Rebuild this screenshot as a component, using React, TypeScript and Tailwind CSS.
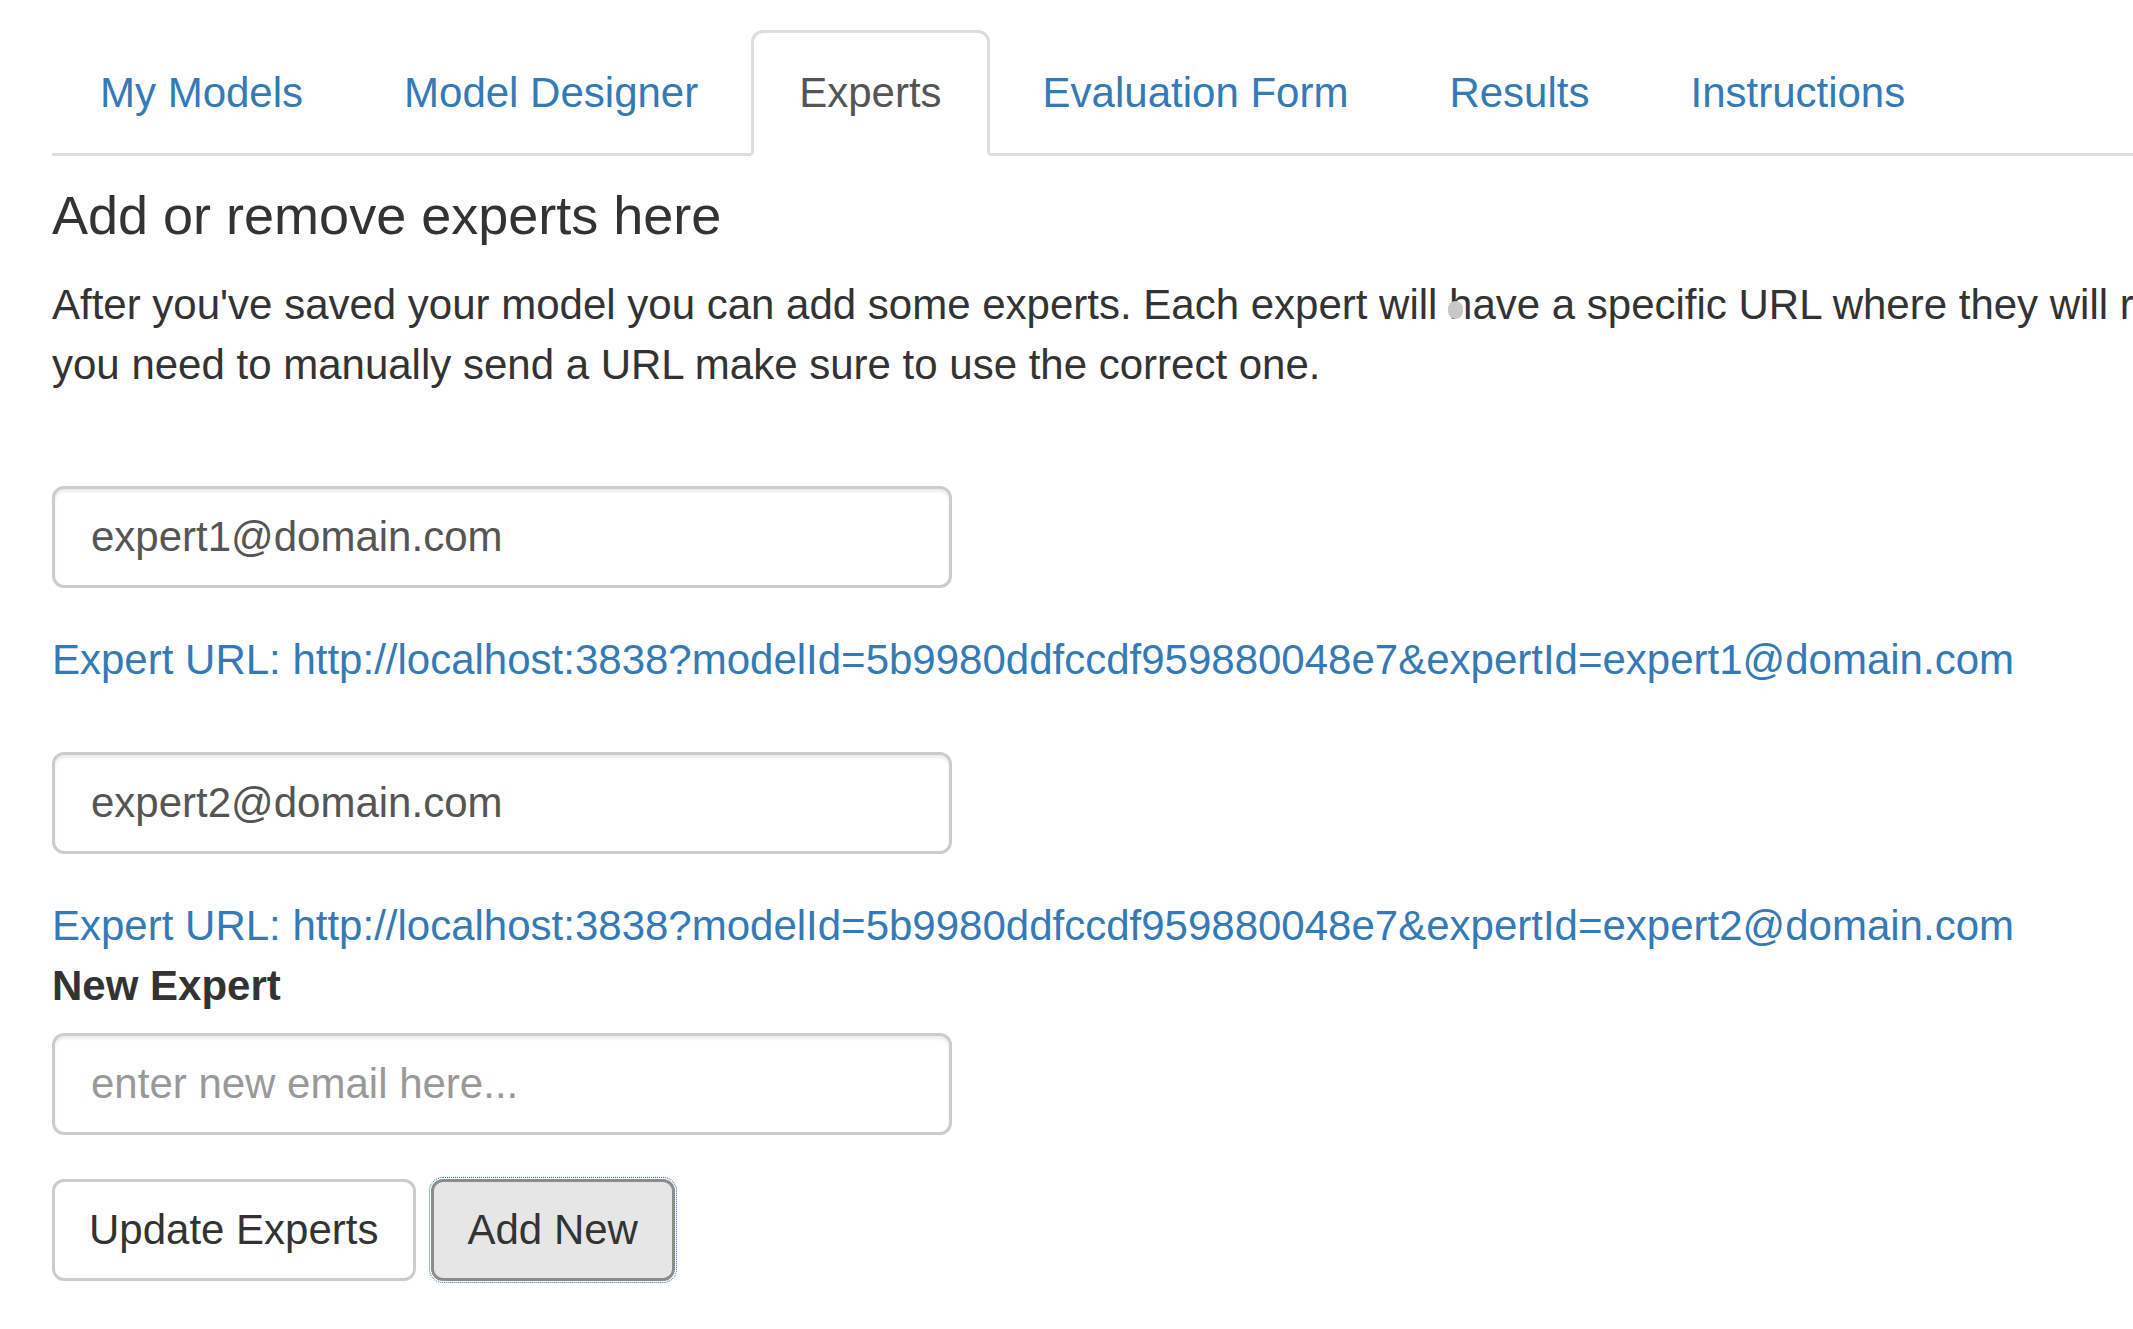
import React from 'react';

const tabs = ['My Models', 'Model Designer', 'Experts', 'Evaluation Form', 'Results', 'Instructions'];

const experts = ['expert1@domain.com', 'expert2@domain.com'];
const modelId = '5b9980ddfccdf959880048e7';

export default function App() {
  return (
    <div
      className="relative min-h-screen w-full overflow-hidden bg-white pl-[52px] text-[42px] leading-[60px] text-[#333]"
      style={{ fontFamily: '"Liberation Sans", Arial, Helvetica, sans-serif' }}
    >
      {/* Tabs */}
      <ul className="mt-[30px] flex border-b-[3px] border-[#ddd]">
        {tabs.map((t) => {
          const active = t === 'Experts';
          return (
            <li key={t} className="-mb-[3px] mr-[5px]">
              <span
                className={
                  active
                    ? 'block rounded-t-[12px] border-[3px] border-[#ddd] border-b-transparent bg-white px-[45px] py-[30px] text-[#555]'
                    : 'block rounded-t-[12px] border-[3px] border-transparent px-[45px] py-[30px] text-[#337ab7]'
                }
              >
                {t}
              </span>
            </li>
          );
        })}
      </ul>

      <div className="w-[2600px]">
        <h4 className="mt-[30px] mb-[30px] text-[54px] leading-[1.1] font-normal text-[#333]">
          Add or remove experts here
        </h4>
        <p className="mb-[30px] whitespace-nowrap">
          After you've saved your model you can add some experts. Each expert will have a specific URL where they will receive the evaluation form. If
          <br />
          you need to manually send a URL make sure to use the correct one.
        </p>
      </div>

      {/* cursor dot */}
      <div className="absolute left-[1448px] top-[301px] h-[18px] w-[15px] rounded-full bg-[#c8c8c8]" />

      <div className="mt-[91px]">
        {experts.map((e, i) => (
          <div key={e} className={i === 0 ? '' : 'mt-[62px]'}>
            <input
              readOnly
              value={e}
              className="block h-[102px] w-[900px] rounded-[12px] border-[3px] border-[#ccc] px-[36px] py-[18px] text-[42px] text-[#555] shadow-[inset_0_3px_3px_rgba(0,0,0,0.075)] outline-none"
            />
            <div className="mt-[42px] whitespace-nowrap text-[#337ab7]">
              Expert URL: http://localhost:3838?modelId={modelId}&expertId={e}
            </div>
          </div>
        ))}
      </div>

      <label className="block font-bold">New Expert</label>
      <input
        placeholder="enter new email here..."
        className="mt-[17px] block h-[102px] w-[900px] rounded-[12px] border-[3px] border-[#ccc] px-[36px] py-[18px] text-[42px] text-[#555] shadow-[inset_0_3px_3px_rgba(0,0,0,0.075)] outline-none placeholder:text-[#999]"
      />

      <div className="mt-[44px] flex gap-[15px]">
        <button className="h-[102px] rounded-[12px] border-[3px] border-[#ccc] bg-white px-[34px] text-[42px] text-[#333]">
          Update Experts
        </button>
        <button className="h-[102px] rounded-[12px] border-[3px] border-[#8c8c8c] bg-[#e6e6e6] px-[34px] text-[42px] text-[#333] outline-1 outline-offset-[1px] outline-dotted outline-[#2a6fb8]">
          Add New
        </button>
      </div>
    </div>
  );
}
